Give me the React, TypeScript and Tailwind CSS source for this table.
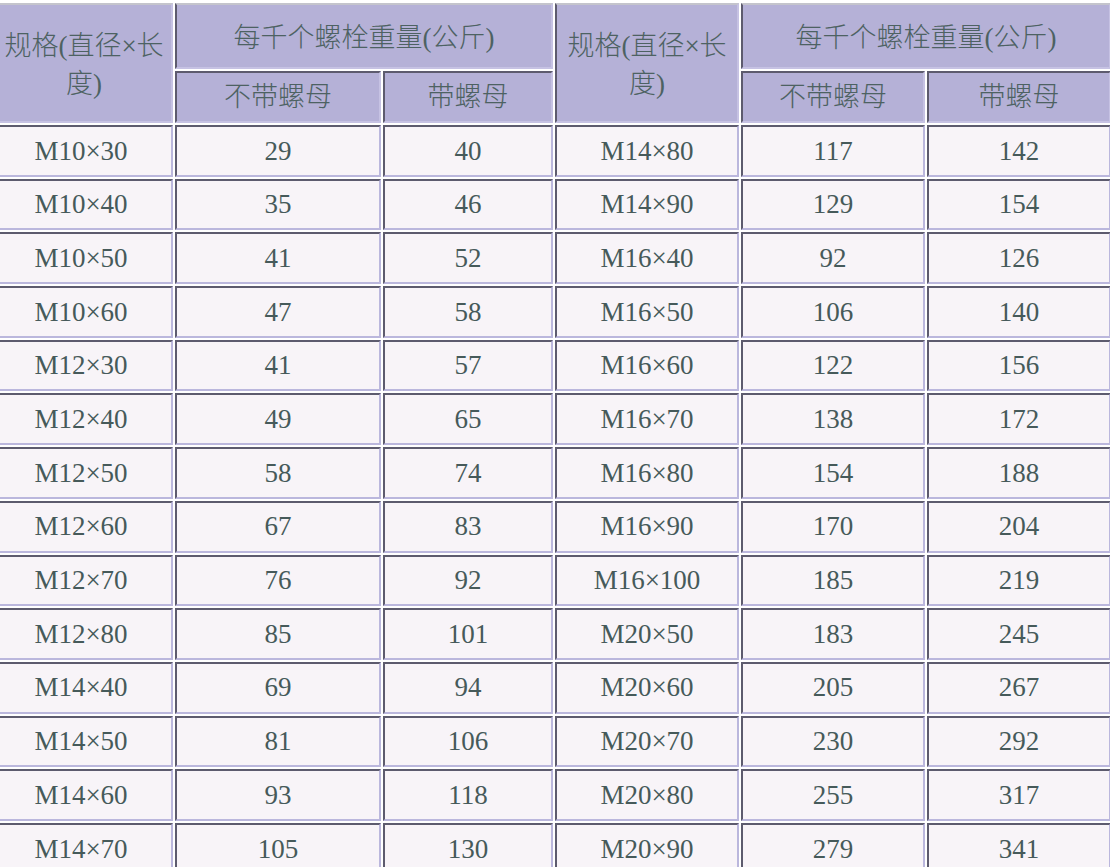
import React from 'react';

const ROWS: [string, number, number, string, number, number][] = [
  ['M10×30', 29, 40, 'M14×80', 117, 142],
  ['M10×40', 35, 46, 'M14×90', 129, 154],
  ['M10×50', 41, 52, 'M16×40', 92, 126],
  ['M10×60', 47, 58, 'M16×50', 106, 140],
  ['M12×30', 41, 57, 'M16×60', 122, 156],
  ['M12×40', 49, 65, 'M16×70', 138, 172],
  ['M12×50', 58, 74, 'M16×80', 154, 188],
  ['M12×60', 67, 83, 'M16×90', 170, 204],
  ['M12×70', 76, 92, 'M16×100', 185, 219],
  ['M12×80', 85, 101, 'M20×50', 183, 245],
  ['M14×40', 69, 94, 'M20×60', 205, 267],
  ['M14×50', 81, 106, 'M20×70', 230, 292],
  ['M14×60', 93, 118, 'M20×80', 255, 317],
  ['M14×70', 105, 130, 'M20×90', 279, 341],
];

const head =
  'flex items-center justify-center text-center font-light text-[#4d6262] bg-[#b5b1d7] border-2 border-t-[#5d5b6e] border-l-[#5d5b6e] border-b-[#c6c2e3] border-r-[#c6c2e3] px-[6px] leading-[38px]';
const cell =
  'flex items-center justify-center bg-[#f8f4f8] border-2 border-t-[#5d5b6e] border-l-[#5d5b6e] border-b-[#bbb7dd] border-r-[#bbb7dd]';

export default function App() {
  return (
    <div className="w-[1110px] h-[867px] overflow-hidden bg-white">
      <div
        className="grid ml-[-11px] mt-[3px] gap-[2px] grid-cols-[184px_206px_170px_184px_184px_184px] grid-rows-[66px_52px_repeat(14,51.7px)] text-[27px] text-[#465a5a]"
        style={{ fontFamily: '"Liberation Serif", "Noto Sans CJK SC", serif' }}
      >
        <div className={`${head} row-span-2 !border-t-[#c4c4cc] pt-[4px] !pl-[12px]`}>规格(直径×长度)</div>
        <div className={`${head} col-span-2 !border-t-[#c4c4cc] pt-[4px]`}>每千个螺栓重量(公斤)</div>
        <div className={`${head} row-span-2 !border-t-[#c4c4cc] pt-[4px]`}>规格(直径×长度)</div>
        <div className={`${head} col-span-2 !border-t-[#c4c4cc] pt-[4px]`}>每千个螺栓重量(公斤)</div>
        <div className={head}>不带螺母</div>
        <div className={head}>带螺母</div>
        <div className={head}>不带螺母</div>
        <div className={head}>带螺母</div>
        {ROWS.map((r) =>
          r.map((v, i) => (
            <div key={`${r[0]}-${i}`} className={cell}>
              {v}
            </div>
          ))
        )}
      </div>
    </div>
  );
}
